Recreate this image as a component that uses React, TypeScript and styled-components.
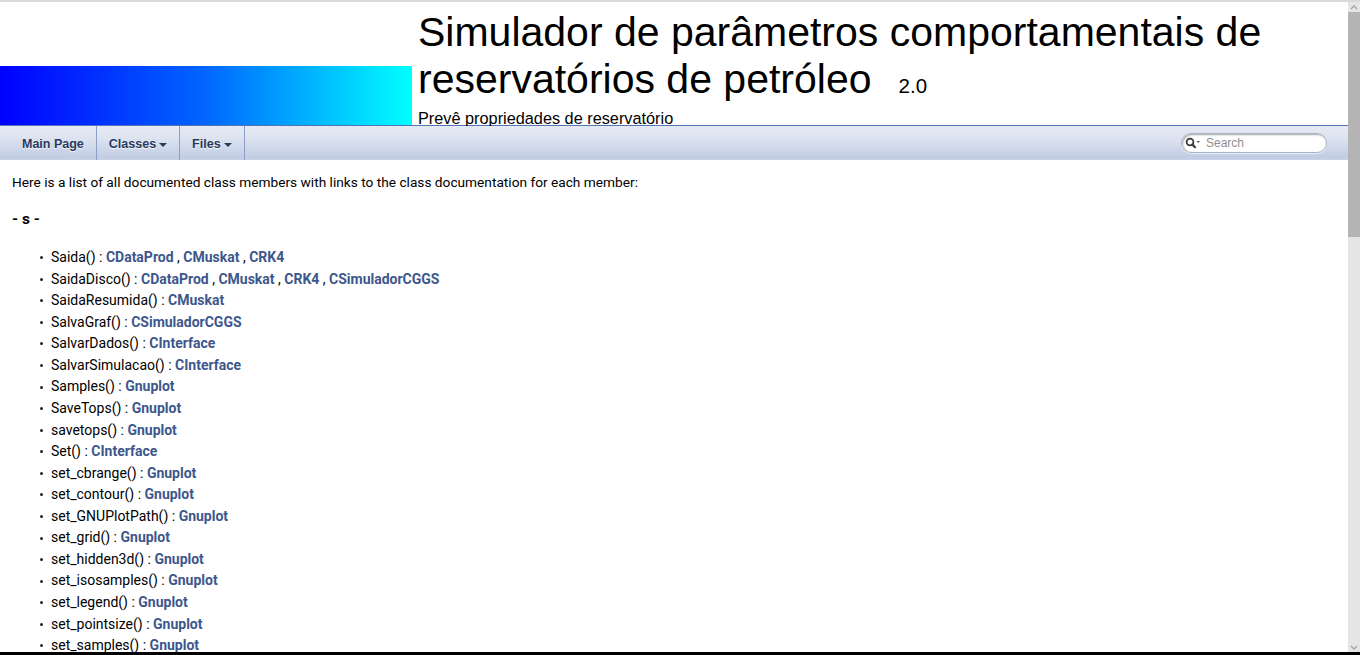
import React from "react";
import styled, { createGlobalStyle } from "styled-components";

const GlobalStyle = createGlobalStyle`
  html, body { margin: 0; padding: 0; background: #fff; overflow: hidden; }
`;

const Frame = styled.div`
  width: 1360px;
  height: 655px;
  display: flex;
  flex-direction: column;
  overflow: hidden;
  background: #fff;
`;

const TopRule = styled.div`
  flex: none;
  height: 2px;
  background: #dadada;
`;

const BottomRule = styled.div`
  flex: none;
  height: 3px;
  background: #000;
`;

const Body = styled.div`
  flex: 1;
  min-height: 0;
  display: flex;
`;

const Page = styled.div`
  flex: 1;
  min-width: 0;
  overflow: hidden;
  display: flex;
  flex-direction: column;
`;

const TitleArea = styled.header`
  flex: none;
  display: flex;
  align-items: flex-end;
  height: 123px;
  border-bottom: 1px solid #5373b4;
`;

const Logo = styled.div`
  flex: none;
  width: 412px;
  height: 59px;
  background: linear-gradient(to right, #0000ff, #0066ff 50%, #00ffff);
`;

const TitleText = styled.div`
  flex: 1;
  align-self: stretch;
  padding: 7px 0 0 6px;
  font-family: "Liberation Sans", Arial, sans-serif;
  color: #000;
`;

const ProjectName = styled.div`
  font-size: 41px;
  line-height: 47px;
`;

const ProjectNumber = styled.span`
  font-size: 20.5px;
  margin-left: 27px;
`;

const ProjectBrief = styled.div`
  font-size: 16.3px;
  line-height: 18px;
`;

const NavBar = styled.nav`
  flex: none;
  height: 34px;
  display: flex;
  align-items: center;
  justify-content: space-between;
  padding: 0 21px 0 10px;
  background: linear-gradient(#e6eaf4 0%, #dde3f0 35%, #cfd8ea 65%, #c1cce4 92%, #c8d2e7 100%);
`;

const Tabs = styled.ul`
  display: flex;
  height: 100%;
  margin: 0;
  padding: 0;
  list-style: none;
`;

const Tab = styled.li`
  display: flex;
  align-items: center;
  padding: 2px 12px 0;
  border-right: 1px solid #8c9fc8;
  font: bold 12.5px "Liberation Sans", Arial, sans-serif;
  color: #283a5d;
  text-shadow: 0 1px 1px rgba(255, 255, 255, 0.9);
  white-space: nowrap;
`;

const Caret = styled.span`
  display: inline-block;
  width: 0;
  height: 0;
  margin-left: 3px;
  margin-top: 1px;
  border-left: 4px solid transparent;
  border-right: 4px solid transparent;
  border-top: 4px solid #283a5d;
`;

const SearchBox = styled.div`
  box-sizing: border-box;
  width: 146px;
  height: 20px;
  border-radius: 10px;
  background: #fff;
  border: 1px solid #a9b3c7;
  box-shadow: inset 1px 1px 2px rgba(0, 0, 0, 0.35), 0 1px 0 rgba(255, 255, 255, 0.6);
  display: flex;
  align-items: center;
  gap: 5px;
  padding-left: 3px;
`;

const SearchLabel = styled.span`
  font: 12px "Liberation Sans", Arial, sans-serif;
  color: #909090;
`;

const Content = styled.main`
  padding: 0 12px;
  font-family: Roboto, "Liberation Sans", sans-serif;
  font-size: 14px;
  color: #000;
`;

const Intro = styled.p`
  margin: 14px 0 0;
  font-size: 13.7px;
  line-height: 16.4px;
`;

const Letter = styled.h3`
  margin: 21px 0 0;
  font-size: 15.5px;
  font-weight: bold;
  line-height: 17.6px;
`;

const MemberList = styled.ul`
  margin: 18px 0 0;
  padding-left: 39px;
  list-style: none;
`;

const Member = styled.li`
  position: relative;
  line-height: 21.56px;
  white-space: nowrap;

  &::before {
    content: "";
    position: absolute;
    left: -11px;
    top: 9.2px;
    width: 3px;
    height: 3px;
    border-radius: 50%;
    background: #222;
  }
`;

const ClassLink = styled.a`
  color: #3d578c;
  font-weight: bold;
  text-decoration: none;
`;

const Scrollbar = styled.div`
  flex: none;
  width: 12px;
  display: flex;
  flex-direction: column;
  background: #e5e5e5;
`;

const ScrollArrow = styled.div`
  flex: none;
  height: 10px;
  display: flex;
  align-items: center;
  justify-content: center;
`;

const Thumb = styled.div`
  flex: none;
  height: 225px;
  background: #b4b4b4;
`;

const Track = styled.div`
  flex: 1;
`;

type Item = { name: string; classes: string[] };

const items: Item[] = [
  { name: "Saida()", classes: ["CDataProd", "CMuskat", "CRK4"] },
  { name: "SaidaDisco()", classes: ["CDataProd", "CMuskat", "CRK4", "CSimuladorCGGS"] },
  { name: "SaidaResumida()", classes: ["CMuskat"] },
  { name: "SalvaGraf()", classes: ["CSimuladorCGGS"] },
  { name: "SalvarDados()", classes: ["CInterface"] },
  { name: "SalvarSimulacao()", classes: ["CInterface"] },
  { name: "Samples()", classes: ["Gnuplot"] },
  { name: "SaveTops()", classes: ["Gnuplot"] },
  { name: "savetops()", classes: ["Gnuplot"] },
  { name: "Set()", classes: ["CInterface"] },
  { name: "set_cbrange()", classes: ["Gnuplot"] },
  { name: "set_contour()", classes: ["Gnuplot"] },
  { name: "set_GNUPlotPath()", classes: ["Gnuplot"] },
  { name: "set_grid()", classes: ["Gnuplot"] },
  { name: "set_hidden3d()", classes: ["Gnuplot"] },
  { name: "set_isosamples()", classes: ["Gnuplot"] },
  { name: "set_legend()", classes: ["Gnuplot"] },
  { name: "set_pointsize()", classes: ["Gnuplot"] },
  { name: "set_samples()", classes: ["Gnuplot"] },
  { name: "set_smooth()", classes: ["Gnuplot"] },
  { name: "set_style()", classes: ["Gnuplot"] },
];

const SearchIcon = () => (
  <svg width="16" height="12" viewBox="0 0 16 12">
    <circle cx="5" cy="5" r="3.4" fill="none" stroke="#3a3a3a" strokeWidth="1.8" />
    <line x1="7.4" y1="7.4" x2="10" y2="10.2" stroke="#3a3a3a" strokeWidth="2.2" strokeLinecap="round" />
    <polygon points="11.5,4 15,4 13.25,6" fill="#555" />
  </svg>
);

const Chevron = ({ down }: { down?: boolean }) => (
  <svg width="8" height="5" viewBox="0 0 8 5">
    <polyline
      points={down ? "1,1 4,4 7,1" : "1,4 4,1 7,4"}
      fill="none"
      stroke="#a3a3a3"
      strokeWidth="1.3"
    />
  </svg>
);

export default function App() {
  return (
    <>
      <GlobalStyle />
      <Frame>
        <TopRule />
        <Body>
          <Page>
            <TitleArea>
              <Logo />
              <TitleText>
                <ProjectName>
                  Simulador de parâmetros comportamentais de reservatórios de petróleo
                  <ProjectNumber>2.0</ProjectNumber>
                </ProjectName>
                <ProjectBrief>Prevê propriedades de reservatório</ProjectBrief>
              </TitleText>
            </TitleArea>
            <NavBar>
              <Tabs>
                <Tab>Main Page</Tab>
                <Tab>
                  Classes
                  <Caret />
                </Tab>
                <Tab>
                  Files
                  <Caret />
                </Tab>
              </Tabs>
              <SearchBox>
                <SearchIcon />
                <SearchLabel>Search</SearchLabel>
              </SearchBox>
            </NavBar>
            <Content>
              <Intro>
                Here is a list of all documented class members with links to the class documentation for each member:
              </Intro>
              <Letter>- s -</Letter>
              <MemberList>
                {items.map((it) => (
                  <Member key={it.name}>
                    {it.name} :{" "}
                    {it.classes.map((c, i) => (
                      <React.Fragment key={c}>
                        {i > 0 && " , "}
                        <ClassLink href="#">{c}</ClassLink>
                      </React.Fragment>
                    ))}
                  </Member>
                ))}
              </MemberList>
            </Content>
          </Page>
          <Scrollbar>
            <ScrollArrow>
              <Chevron />
            </ScrollArrow>
            <Thumb />
            <Track />
            <ScrollArrow>
              <Chevron down />
            </ScrollArrow>
          </Scrollbar>
        </Body>
        <BottomRule />
      </Frame>
    </>
  );
}
